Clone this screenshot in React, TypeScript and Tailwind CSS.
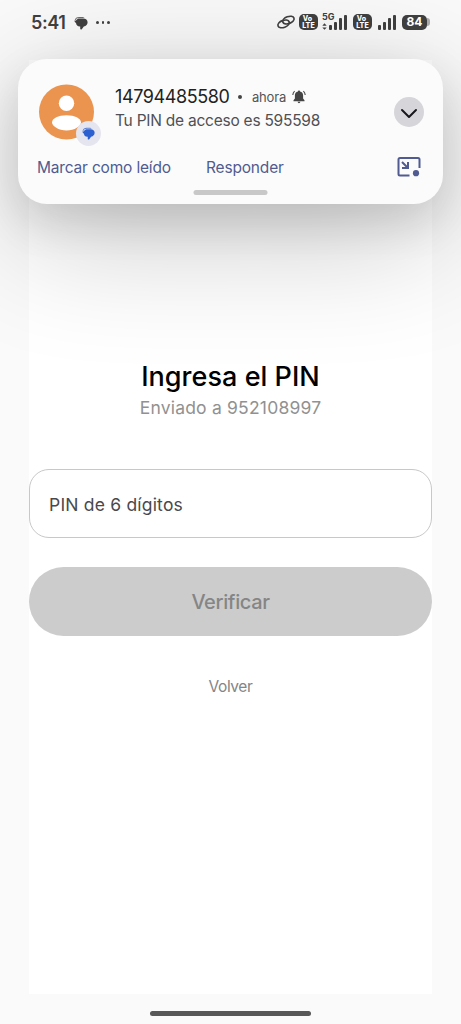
import React from "react";

function ChatGlyph({ className }: { className: string }) {
  return (
    <svg viewBox="0 0 14 14" className={className} fill="currentColor">
      <path d="M.6 4.4C1.1 2 2.8 .9 5 .9H9L10.6 1.9H5.4C3.2 1.9 1.9 2.7 1.4 4.4Z" opacity=".75" />
      <path d="M.3 4.6C1 5 1.7 4.8 2.2 4.2C3 3 4.2 2.4 5.6 2.4H9.2C11.8 2.4 13.6 3.9 13.6 6.2C13.6 8.5 12.2 10 9.8 10.4L7.8 13.2C7.2 13.9 6.2 13.6 6.2 12.8V10.5H5.8C3.6 10.4 2.2 9 2.1 7.2C1.2 6.6 .5 5.7 .3 4.6Z" />
    </svg>
  );
}

function LinkGlyph() {
  return (
    <svg viewBox="0 0 20 16" className="h-4 w-5" fill="none" stroke="currentColor" strokeWidth="1.7" strokeLinecap="round">
      <ellipse cx="12.4" cy="6.1" rx="5.9" ry="3.5" transform="rotate(-20 12.4 6.1)" />
      <ellipse cx="7.6" cy="9.9" rx="5.9" ry="3.5" transform="rotate(-20 7.6 9.9)" />
    </svg>
  );
}

function VoLte() {
  return (
    <div className="flex h-4 w-[19px] flex-col items-center justify-center rounded-[5px] bg-[#3e3e3e] text-[7px] leading-[7px] font-extrabold text-white">
      <span className="h-[7px] -translate-x-[1px] tracking-[0.2px]">Vo</span>
      <span className="h-[7px] tracking-[0.1px]">LTE</span>
    </div>
  );
}

function Bars() {
  return (
    <div className="flex h-[15px] items-end gap-[2px]">
      <i className="h-[5px] w-[3px] rounded-[1px] bg-[#3e3e3e]" />
      <i className="h-2 w-[3px] rounded-[1px] bg-[#3e3e3e]" />
      <i className="h-[12px] w-[3px] rounded-[1px] bg-[#3e3e3e]" />
      <i className="h-[15px] w-[3px] rounded-[1px] bg-[#3e3e3e]" />
    </div>
  );
}

function StatusBar() {
  return (
    <header className="relative z-20 flex h-[60px] shrink-0 items-start pt-[14px] pr-[31px] pl-[31px] text-[#3e3e3e]">
      <div className="flex h-[17px] items-center">
        <span className="w-[43px] text-[18px] leading-none font-semibold tracking-[-0.4px] whitespace-nowrap">5:41</span>
        <ChatGlyph className="h-[14px] w-[14px]" />
        <div className="ml-[8px] flex gap-[3px]">
          <i className="size-[2.5px] rounded-full bg-current" />
          <i className="size-[2.5px] rounded-full bg-current" />
          <i className="size-[2.5px] rounded-full bg-current" />
        </div>
      </div>
      <div className="ml-auto flex h-4 items-center">
        <LinkGlyph />
        <div className="ml-[3px]"><VoLte /></div>
        <div className="relative ml-1 flex w-[25px] justify-end">
          <Bars />
          <span className="absolute -top-[3px] left-0 text-[9px] leading-none font-bold">5G</span>
          <svg viewBox="0 0 5 8" className="absolute bottom-0 left-0 h-[7px] w-[5px]" fill="currentColor">
            <path d="M0 3L2.5 .2L5 3ZM0 5L2.5 7.8L5 5Z" />
          </svg>
        </div>
        <div className="ml-[6px]"><VoLte /></div>
        <div className="ml-[6px]"><Bars /></div>
        <div className="ml-[6px] flex items-center">
          <span className="flex h-[15px] w-[25px] items-center justify-center rounded-[5px] bg-[#3e3e3e] text-[12px] leading-none font-bold text-white">84</span>
          <i className="h-2 w-[3px] rounded-r-full bg-[#aaaaaa]" />
        </div>
      </div>
    </header>
  );
}

function BellGlyph() {
  return (
    <svg viewBox="0 0 14 14" className="h-[14px] w-[14px]" fill="currentColor">
      <path d="M7 .5C7.6 .5 8 .9 8 1.5C10 1.9 11.1 3.4 11.1 5.5V8.6L12.5 10.2V11.2H1.5V10.2L2.9 8.6V5.5C2.9 3.4 4 1.9 6 1.5C6 .9 6.4 .5 7 .5ZM5.6 11.8H8.4C8.2 12.7 7.7 13.2 7 13.2S5.8 12.7 5.6 11.8Z" />
      <path d="M2.6 1.1C1.5 2.1 .9 3.4 .8 5M11.4 1.1C12.5 2.1 13.1 3.4 13.2 5" fill="none" stroke="currentColor" strokeWidth="1.1" />
    </svg>
  );
}

function Notification() {
  return (
    <section className="absolute top-[59px] left-[18px] z-10 h-[145px] w-[425px] rounded-[29px] bg-[#fbfbfb] shadow-[0_18px_44px_rgba(0,0,0,0.12),0_30px_130px_rgba(0,0,0,0.24)]">
      <div className="flex h-[90px] pt-[25px] pr-[19px] pl-[21px]">
        <div className="relative size-[56px]">
          <svg viewBox="0 0 56 56" className="size-[56px]">
            <circle cx="27.5" cy="28" r="27.5" fill="#eb944f" />
            <circle cx="27.5" cy="19.3" r="7.7" fill="#fff" />
            <path d="M13 38.2C13 34.5 19.3 31.2 27.5 31.2S42 34.5 42 38.2S35.5 46.5 27.5 46.5S13 42 13 38.2Z" fill="#fff" />
          </svg>
          <span className="absolute top-[37px] left-[37px] flex size-[25px] items-center justify-center rounded-full bg-[#e5e5ef] text-[#2c5fd0]">
            <ChatGlyph className="h-[13px] w-[13px]" />
          </span>
        </div>
        <div className="ml-[20px] pt-[2px]">
          <div className="flex h-[20px] items-center whitespace-nowrap">
            <span className="w-[114px] text-[18px] font-normal tracking-[-0.4px] text-[#222222]">14794485580</span>
            <i className="mt-[2px] ml-[9px] size-[4px] rounded-full bg-[#444444]" />
            <span className="mt-[3px] ml-[10px] w-[34px] text-[13px] tracking-[-0.2px] text-[#555555]">ahora</span>
            <span className="mt-[1px] ml-[6px] text-[#444444]"><BellGlyph /></span>
          </div>
          <p className="mt-[5px] text-[15.5px] leading-[20px] tracking-[-0.24px] whitespace-nowrap text-[#505054]">Tu PIN de acceso es 595598</p>
        </div>
        <button className="mt-[13px] ml-auto flex size-[30px] items-center justify-center rounded-full bg-[#d5d5da]">
          <svg viewBox="0 0 18 12" className="mt-[3px] h-3 w-[18px]" fill="none" stroke="#18181c" strokeWidth="2" strokeLinecap="round" strokeLinejoin="round">
            <path d="M2 2L9 9L16 2" />
          </svg>
        </button>
      </div>
      <div className="flex h-[36px] items-center pr-[22px] pl-[19px] text-[15.5px] tracking-[-0.18px] whitespace-nowrap text-[#505b91]">
        <button className="w-[169px] pt-[2px] text-left">Marcar como leído</button>
        <button className="pt-[2px]">Responder</button>
        <svg viewBox="0 0 24 20" className="ml-auto h-5 w-6" fill="none" stroke="#505b91" strokeWidth="2">
          <path d="M12.5 18.5H3Q1.5 18.5 1.5 17V2.5Q1.5 1 3 1H21Q22.5 1 22.5 2.5V11" />
          <path d="M5 5L10.5 10.5M11 5V11H5" />
          <circle cx="19" cy="16.2" r="3.1" fill="#505b91" stroke="none" />
        </svg>
      </div>
      <div className="mx-auto mt-[5px] h-[5px] w-[74px] -translate-x-[0.5px] rounded-full bg-[#c8c8c8]" />
    </section>
  );
}

export default function App() {
  return (
    <div className="relative flex h-[1024px] w-[461px] flex-col overflow-hidden bg-[#fafafa] font-['Inter',sans-serif]">
      <StatusBar />
      <Notification />
      <main className="mx-auto flex h-[934px] w-[403px] shrink-0 flex-col items-center bg-white pt-[299px]">
        <h1 className="text-[27px] leading-[36px] font-medium tracking-[0.03px] whitespace-nowrap text-black">Ingresa el PIN</h1>
        <p className="mt-px text-[17.5px] leading-[24px] tracking-[0.2px] whitespace-nowrap text-[#919191]">Enviado a 952108997</p>
        <input
          aria-label="PIN"
          placeholder="PIN de 6 dígitos"
          className="mt-[49px] h-[69px] w-full shrink-0 rounded-[20px] border-[1.5px] border-[#c8c8c8] bg-white px-[19px] pt-px text-[17.5px] tracking-[0.2px] text-[#49494d] outline-none placeholder:text-[#49494d]"
        />
        <button className="mt-[29px] h-[69px] w-full shrink-0 rounded-full bg-[#cccccc] pt-px text-[20px] font-medium tracking-[-0.35px] text-[#858585]">Verificar</button>
        <button className="mt-[39px] text-[15.5px] leading-6 tracking-[-0.4px] text-[#858585]">Volver</button>
      </main>
      <div className="mx-auto mt-[17px] h-[5px] w-[161px] shrink-0 rounded-full bg-[#585858]" />
    </div>
  );
}
